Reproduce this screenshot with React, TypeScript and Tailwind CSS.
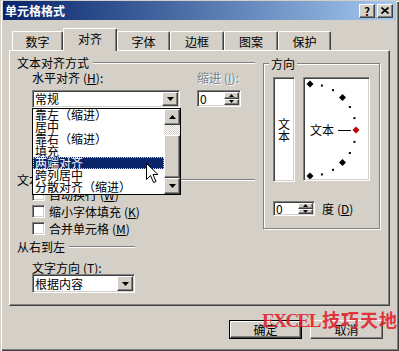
import React from 'react';

const raised =
  'border border-t-white border-l-white border-r-[#404040] border-b-[#404040] shadow-[inset_-1px_-1px_0_#808080] bg-[#d4d0c8]';
const sunken =
  'border border-t-[#808080] border-l-[#808080] border-r-white border-b-white shadow-[inset_1px_1px_0_#404040,inset_-1px_-1px_0_#d4d0c8]';

function Down({ w = 7, h = 4 }: { w?: number; h?: number }) {
  return (
    <svg width={w} height={h} viewBox={`0 0 ${w} ${h}`}>
      <polygon points={`0,0 ${w},0 ${w / 2},${h}`} fill="#000" />
    </svg>
  );
}

function Up({ w = 7, h = 4 }: { w?: number; h?: number }) {
  return (
    <svg width={w} height={h} viewBox={`0 0 ${w} ${h}`}>
      <polygon points={`0,${h} ${w},${h} ${w / 2},0`} fill="#000" />
    </svg>
  );
}

function Key({ k }: { k: string }) {
  return (
    <span className="ml-[3px]">
      (<u>{k}</u>)
    </span>
  );
}

function GroupHeader({ title, className = '' }: { title: string; className?: string }) {
  return (
    <div className={`flex h-[12px] items-center ${className}`}>
      <span className="leading-[12px] whitespace-nowrap">{title}</span>
      <div className="ml-[4px] h-[2px] flex-1 border-t border-b border-t-[#808080] border-b-white" />
    </div>
  );
}

function Combo({ value, className }: { value: string; className: string }) {
  return (
    <div className={`flex bg-white ${sunken} ${className}`}>
      <span className="flex-1 pl-[2px] self-center leading-[12px]">{value}</span>
      <div className={`m-[1px] flex w-[16px] items-center justify-center ${raised}`}>
        <Down />
      </div>
    </div>
  );
}

function Spinner({ className }: { className: string }) {
  return (
    <div className={`flex bg-white ${sunken} ${className}`}>
      <span className="flex-1 pl-[2px] self-center leading-[12px]">0</span>
      <div className="m-[1px] flex w-[15px] flex-col">
        <div className={`flex flex-1 items-center justify-center ${raised}`}>
          <Up w={5} h={3} />
        </div>
        <div className={`flex flex-1 items-center justify-center ${raised}`}>
          <Down w={5} h={3} />
        </div>
      </div>
    </div>
  );
}

function Check({ label, k }: { label: string; k: string }) {
  return (
    <div className="flex h-[13px] items-center">
      <div className={`h-[13px] w-[13px] bg-white ${sunken}`} />
      <span className="ml-[4px] leading-[12px]">
        {label}
        <Key k={k} />
      </span>
    </div>
  );
}

const tabs = [
  { t: '数字', w: 'w-[51px]' },
  { t: '对齐', w: 'w-[54px]', on: true },
  { t: '字体', w: 'w-[53px]' },
  { t: '边框', w: 'w-[54px]' },
  { t: '图案', w: 'w-[54px]' },
  { t: '保护', w: 'w-[53px]' },
];

const items = ['靠左（缩进）', '居中', '靠右（缩进）', '填充', '两端对齐', '跨列居中', '分散对齐（缩进）'];

function Arc() {
  const cx = 5;
  const cy = 51;
  const r = 46;
  const marks = [90, 75, 60, 45, 30, 15, 0, -15, -30, -45, -60, -75, -90];
  return (
    <svg width="63" height="100" viewBox="0 0 63 100" className="block">
      {marks.map((a) => {
        const x = cx + r * Math.cos((a * Math.PI) / 180);
        const y = cy - r * Math.sin((a * Math.PI) / 180);
        if (a % 45 === 0) {
          const s = 3.5;
          return (
            <polygon
              key={a}
              points={`${x},${y - s} ${x + s},${y} ${x},${y + s} ${x - s},${y}`}
              fill={a === 0 ? '#c00000' : '#000'}
            />
          );
        }
        return <rect key={a} x={x - 1} y={y - 1} width="2" height="2" fill="#000" />;
      })}
      <text x="5" y="56" fontSize="12" fontFamily="Noto Sans CJK SC, sans-serif" fill="#000">
        文本
      </text>
      <line x1="33" y1="51.5" x2="46" y2="51.5" stroke="#000" strokeWidth="1" />
    </svg>
  );
}

export default function App() {
  return (
    <div className="relative h-[351px] w-[399px] overflow-hidden bg-[#d4d0c8] font-['Noto_Sans_CJK_SC',sans-serif] text-[12px] leading-[12px] text-black shadow-[inset_1px_1px_0_#d4d0c8,inset_2px_2px_0_#fff,inset_-1px_-1px_0_#404040,inset_-2px_-2px_0_#808080]">
      {/* title bar */}
      <div className="mx-[3px] mt-[1px] flex h-[19px] items-center bg-linear-to-r from-[#0a246a] to-[#a6caf0] pr-[3px] pl-[2px]">
        <span className="flex-1 font-bold text-white">单元格格式</span>
        <div className={`flex h-[14px] w-[16px] items-center justify-center text-[11px] font-bold ${raised}`}>?</div>
        <div className={`ml-[2px] flex h-[14px] w-[16px] items-center justify-center ${raised}`}>
          <svg width="8" height="7" viewBox="0 0 8 7">
            <path d="M0.5 0.5L7.5 6.5M7.5 0.5L0.5 6.5" stroke="#000" strokeWidth="1.6" />
          </svg>
        </div>
      </div>

      {/* tabs */}
      <div className="mt-[8px] ml-[12px] flex h-[22px] items-end">
        {tabs.map((t) =>
          t.on ? (
            <div
              key={t.t}
              className={`relative z-10 -mb-[1px] flex h-[23px] items-start justify-center rounded-t-[2px] border-t border-l border-r border-t-white border-l-white border-r-[#404040] bg-[#d4d0c8] pt-[4px] shadow-[inset_-1px_0_0_#808080] ${t.w}`}
            >
              {t.t}
            </div>
          ) : (
            <div
              key={t.t}
              className={`flex h-[19px] items-start justify-center rounded-t-[2px] border-t border-l border-r border-t-white border-l-white border-r-[#404040] pt-[4px] shadow-[inset_-1px_0_0_#808080] ${t.w}`}
            >
              {t.t}
            </div>
          )
        )}
      </div>

      {/* panel */}
      <div className="ml-[9px] flex h-[256px] w-[381px] gap-[8px] border border-t-white border-l-white border-r-[#404040] border-b-[#404040] pt-[6px] pl-[7px] shadow-[inset_-1px_-1px_0_#808080]">
        <div className="flex w-[238px] flex-col">
          <GroupHeader title="文本对齐方式" />
          <div className="mt-[3px] flex h-[12px] pl-[15px]">
            <span className="w-[165px]">
              水平对齐
              <Key k="H" />:
            </span>
            <span className="text-[#808080] [text-shadow:1px_1px_0_#fff]">
              缩进
              <Key k="I" />:
            </span>
          </div>
          <div className="mt-[6px] flex items-start pl-[15px]">
            <Combo value="常规" className="h-[18px] w-[148px]" />
            <Spinner className="ml-[17px] h-[17px] w-[44px]" />
          </div>
          <GroupHeader title="文本控制" className="mt-[66px]" />
          <div className="mt-[2px] flex flex-col gap-[4px] pl-[15px]">
            <Check label="自动换行" k="W" />
            <Check label="缩小字体填充" k="K" />
            <Check label="合并单元格" k="M" />
          </div>
          <GroupHeader title="从右到左" className="mt-[6px] w-[118px]" />
          <div className="mt-[9px] h-[12px] pl-[15px]">
            文字方向
            <Key k="T" />:
          </div>
          <div className="pl-[15px]">
            <Combo value="根据内容" className="h-[19px] w-[103px]" />
          </div>
        </div>

        <div className="relative mt-[6px] h-[166px] w-[117px] border border-[#808080] shadow-[inset_1px_1px_0_#fff,1px_1px_0_#fff]">
          <span className="absolute -top-[6px] left-[5px] bg-[#d4d0c8] px-[2px]">方向</span>
          <div className="flex gap-[8px] pt-[13px] pl-[9px]">
            <div className={`flex h-[105px] w-[22px] flex-col items-center justify-center bg-white ${sunken}`}>
              <span>文</span>
              <span>本</span>
            </div>
            <div className={`h-[104px] w-[67px] bg-white ${sunken} p-[1px]`}>
              <Arc />
            </div>
          </div>
          <div className="mt-[19px] flex items-center pl-[9px]">
            <Spinner className="h-[15px] w-[42px]" />
            <span className="ml-[7px]">
              度<Key k="D" />
            </span>
          </div>
        </div>
      </div>

      {/* buttons */}
      <div className="mt-[14px] flex gap-[8px] pl-[229px]">
        <div className="h-[19px] w-[73px] border border-black">
          <div className={`flex h-full items-center justify-center ${raised}`}>确定</div>
        </div>
        <div className={`flex h-[19px] w-[73px] items-center justify-center ${raised}`}>取消</div>
      </div>

      {/* open dropdown list */}
      <div className="absolute top-[108px] left-[32px] z-20 flex h-[87px] w-[149px] border border-black bg-white">
        <div className="flex flex-1 flex-col">
          {items.map((it, i) => (
            <div
              key={it}
              className={`h-[12px] pl-[2px] leading-[12px] whitespace-nowrap ${
                i === 4 ? 'bg-[#0a246a] text-white outline-1 outline-dotted outline-offset-[-1px] outline-[#d4d0c8]' : ''
              }`}
            >
              {it}
            </div>
          ))}
        </div>
        <div className="flex w-[16px] flex-col">
          <div className={`flex h-[16px] items-center justify-center ${raised}`}>
            <Up />
          </div>
          <div className="h-[10px] bg-[repeating-conic-gradient(#d4d0c8_0_25%,#fff_0_50%)] [background-size:2px_2px]" />
          <div className={`h-[43px] ${raised}`} />
          <div className={`flex h-[16px] items-center justify-center ${raised}`}>
            <Down />
          </div>
        </div>
      </div>

      {/* mouse pointer */}
      <svg className="absolute top-[163px] left-[146px] z-30" width="13" height="21" viewBox="0 0 13 21">
        <polygon
          points="0.5,0.5 0.5,16.5 4.5,12.5 7.5,19.5 10,18.5 7,11.5 12,11.5"
          fill="#fff"
          stroke="#000"
          strokeWidth="1"
        />
      </svg>

      {/* watermark */}
      <div className="absolute top-[313px] left-[262px] z-30 flex items-baseline text-[#e0202a]/90">
        <span className="font-['Liberation_Serif',serif] text-[19px] font-bold tracking-[-1.5px]">EXCEL</span>
        <span className="ml-[2px] text-[18px] font-bold tracking-[1px]">技巧天地</span>
      </div>
    </div>
  );
}
